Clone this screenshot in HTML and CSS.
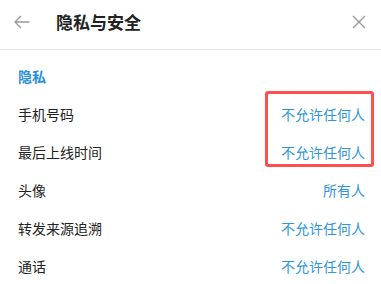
FILE: index.html
```html
<!DOCTYPE html>
<html lang="zh">
<head>
<meta charset="utf-8">
<link rel="stylesheet" href="styles.css">
</head>
<body>
<div class="panel">
  <header class="header">
    <svg class="icon back" width="16" height="14" viewBox="0 0 16 14"><path d="M15.5 7H1M7 1L1 7l6 6" fill="none" stroke="#9a9a9a" stroke-width="1.4"/></svg>
    <h1 class="title">隐私与安全</h1>
    <svg class="icon close" width="14" height="14" viewBox="0 0 14 14"><path d="M1 1l12 12M13 1L1 13" fill="none" stroke="#9a9a9a" stroke-width="1.4"/></svg>
  </header>
  <div class="content">
    <div class="section-title">隐私</div>
    <div class="list">
      <div class="highlight"></div>
      <div class="row"><span class="label">手机号码</span><span class="value">不允许任何人</span></div>
      <div class="row"><span class="label">最后上线时间</span><span class="value">不允许任何人</span></div>
      <div class="row"><span class="label">头像</span><span class="value">所有人</span></div>
      <div class="row"><span class="label">转发来源追溯</span><span class="value">不允许任何人</span></div>
      <div class="row"><span class="label">通话</span><span class="value">不允许任何人</span></div>
    </div>
  </div>
</div>
</body>
</html>
```
FILE: styles.css
```css
* { box-sizing: border-box; margin: 0; padding: 0; }
html, body { background: #fff; }
body {
  font-family: "Noto Sans CJK SC", "Noto Sans", sans-serif;
  color: #222;
  width: 381px;
  height: 284px;
  overflow: hidden;
}
.header {
  height: 50px;
  display: flex;
  align-items: center;
  padding: 0 14px 6px 14px;
  border-bottom: 1px solid #e6e6e6;
}
.back { margin-right: 26px; flex: none; }
.title {
  flex: 1;
  font-size: 17px;
  font-weight: bold;
  color: #222;
  letter-spacing: 0;
  line-height: 20px;
}
.close { flex: none; margin-right: 1px; }
.content { padding: 16px 16px 0 18px; }
.section-title {
  font-size: 14px;
  font-weight: bold;
  color: #2b8fd6;
  line-height: 20px;
  margin-bottom: 9px;
}
.list { position: relative; }
.row {
  display: flex;
  justify-content: space-between;
  align-items: center;
  height: 38px;
  font-size: 14px;
}
.label { color: #222; }
.value { color: #2f96dc; }
.highlight {
  position: absolute;
  left: 247px;
  top: -4px;
  width: 109px;
  height: 76px;
  border: 3px solid #ff5050;
  border-radius: 3px;
}
```
